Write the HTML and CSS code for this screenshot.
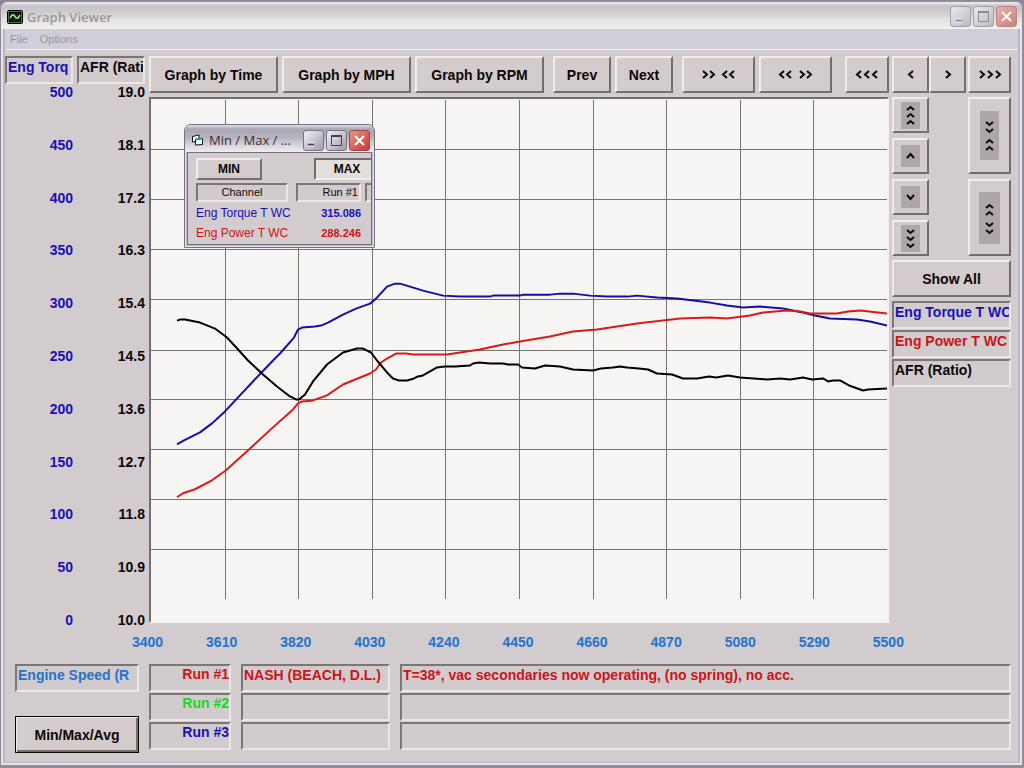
FILE: index.html
```html
<!DOCTYPE html>
<html lang="en">
<head>
<meta charset="utf-8">
<title>Graph Viewer</title>
<link rel="stylesheet" href="styles.css">
</head>
<body>
<div class="window">
  <header class="titlebar">
    <svg class="app-icon" width="16" height="14" viewBox="0 0 16 14"><rect x="0.5" y="0.5" width="15" height="13" rx="1.5" fill="#b5c9a8" stroke="#000"/><rect x="2" y="2" width="12" height="10" fill="#06280a" stroke="#000"/><path d="M3 8L5 5H7L9 8H11L13 5" fill="none" stroke="#a4ee9a" stroke-width="1.4"/></svg>
    <h1 class="title">Graph Viewer</h1>
    <div class="caption-buttons">
      <button class="cap" aria-label="Minimize"><svg width="19" height="19" viewBox="0 0 19 19"><path d="M5 13.5H11" stroke="#fff" stroke-width="4"/><path d="M5 13.5H11" stroke="#8c8992" stroke-width="2"/></svg></button>
      <button class="cap" aria-label="Maximize"><svg width="19" height="19" viewBox="0 0 19 19"><path d="M4.500 5.500H14.500V14.500H4.500Z" fill="none" stroke="#8c8992"/><path d="M4 5H15" stroke="#8c8992" stroke-width="2"/></svg></button>
      <button class="cap cap-close" aria-label="Close"><svg width="19" height="19" viewBox="0 0 19 19"><path d="M5 5L14 14M14 5L5 14" stroke="#fff" stroke-width="2"/></svg></button>
    </div>
  </header>
  <nav class="menubar"><button class="menu">File</button><button class="menu">Options</button></nav>

  <main class="workspace">
    <section class="axes">
      <div class="axis">
        <div class="field blue">Eng Torq</div>
        <div class="scale blue"><span>500</span><span>450</span><span>400</span><span>350</span><span>300</span><span>250</span><span>200</span><span>150</span><span>100</span><span>50</span><span>0</span></div>
      </div>
      <div class="axis">
        <div class="field">AFR (Rati</div>
        <div class="scale"><span>19.0</span><span>18.1</span><span>17.2</span><span>16.3</span><span>15.4</span><span>14.5</span><span>13.6</span><span>12.7</span><span>11.8</span><span>10.9</span><span>10.0</span></div>
      </div>
    </section>

    <div class="toolbar">
      <div class="group"><button class="btn">Graph by Time</button><button class="btn">Graph by MPH</button><button class="btn">Graph by RPM</button></div>
      <div class="group"><button class="btn">Prev</button><button class="btn">Next</button></div>
      <div class="group"><button class="btn" aria-label="Zoom out"><svg width="36" height="9" viewBox="0 0 36 9"><path class="arrow" d="M2 1L6 4.500L2 8M9 1L13 4.500L9 8M26 1L22 4.500L26 8M33 1L29 4.500L33 8"/></svg></button><button class="btn" aria-label="Zoom in"><svg width="36" height="9" viewBox="0 0 36 9"><path class="arrow" d="M6 1L2 4.500L6 8M13 1L9 4.500L13 8M22 1L26 4.500L22 8M29 1L33 4.500L29 8"/></svg></button></div>
      <button class="btn first" aria-label="First"><svg width="24" height="9" viewBox="0 0 24 9"><path class="arrow" d="M6 1L2 4.500L6 8M14 1L10 4.500L14 8M22 1L18 4.500L22 8"/></svg></button>
    </div>
    <div class="pan">
      <div class="pair"><button class="btn" aria-label="Left"><svg width="8" height="9" viewBox="0 0 8 9"><path class="arrow" d="M6 1L2 4.500L6 8"/></svg></button><button class="btn" aria-label="Right"><svg width="8" height="9" viewBox="0 0 8 9"><path class="arrow" d="M2 1L6 4.500L2 8"/></svg></button></div>
      <button class="btn last" aria-label="Last"><svg width="24" height="9" viewBox="0 0 24 9"><path class="arrow" d="M2 1L6 4.500L2 8M10 1L14 4.500L10 8M18 1L22 4.500L18 8"/></svg></button>
    </div>

    <section class="chart">
      <svg class="plot" viewBox="151 99 736 523" preserveAspectRatio="none" role="img" aria-label="Torque, power and AFR against engine speed">
        <path class="grid" d="M225.500 100V600M298.500 100V600M372.500 100V600M445.500 100V600M519.500 100V600M593.500 100V600M666.500 100V600M740.500 100V600M813.500 100V600M151 149.500H887M151 199.500H887M151 249.500H887M151 299.500H887M151 350.500H887M151 400.500H887M151 450.500H887M151 500.500H887M151 550.500H887"/>
        <polyline class="line torque" points="177,445 184,441 192,437 200,433 212,424 225,412 239,397 253,382 273,361 280,354 294,338 298,330 302,328 315,327 321,326 328,323 343,315 356,309 370,304 376,299 387,287 395,284 400,284 410,287 423,291 443,296 460,297 490,297 493,296 520,296 523,295 550,295 560,294 573,294 590,296 607,297 627,297 637,296 657,298 677,299 710,303 727,306 743,308 760,307 783,309 803,313 815,316 830,319 857,320 870,322 887,326"/>
        <polyline class="line power" points="177,498 183,494 195,490 212,481 226,471 247,452 273,428 293,410 298,404 302,402 313,401 327,396 343,385 370,374 376,370 381,363 387,359 396,354 406,354 413,355 447,355 480,350 503,345 520,342 550,337 573,332 597,330 637,324 680,319 710,318 727,319 750,316 763,313 775,312 787,311 800,312 810,314 837,314 848,312 860,311 887,314"/>
        <polyline class="line afr" points="177,321 180,320 185,320 200,323 215,329 227,338 239,351 248,361 263,375 277,387 290,397 296,400 299,400 305,395 313,382 327,365 343,353 350,351 357,349 363,349 371,353 377,361 387,373 393,379 399,381 407,381 414,379 418,377 423,376 437,368 445,367 455,367 470,366 473,364 479,363 490,364 503,364 508,365 518,365 522,368 535,369 545,366 560,367 573,370 593,371 601,369 613,368 620,367 627,368 639,369 648,370 657,374 672,375 683,379 697,379 709,377 716,378 728,376 740,378 767,380 780,379 790,380 803,378 812,380 823,379 828,382 833,381 840,381 849,386 863,391 868,390 887,389"/>
      </svg>
      <section class="popup">
        <header class="popup-title">
          <svg width="13" height="12" viewBox="0 0 13 12"><path d="M1.500 2.500L8 1V7L1.500 8Z" fill="#fff" stroke="#111"/><path d="M4.500 5.500L11.500 4.500V10.500L4.500 11Z" fill="#fff" stroke="#111"/><path d="M4.500 5.500L11.500 4.500" stroke="#2a9aa0" stroke-width="2"/></svg>
          <h2 class="popup-name">Min / Max / ...</h2>
          <div class="caption-buttons">
            <button class="cap cap-live" aria-label="Minimize"><svg width="19" height="19" viewBox="0 0 19 19"><path d="M4 13.500H10" stroke="#fff" stroke-width="4"/><path d="M4 13.500H10" stroke="#43434f" stroke-width="2"/></svg></button>
            <button class="cap cap-live" aria-label="Maximize"><svg width="19" height="19" viewBox="0 0 19 19"><path d="M4.500 4.500H14.500V14.500H4.500Z" fill="none" stroke="#43434f"/><path d="M4 5H15" stroke="#43434f" stroke-width="2"/></svg></button>
            <button class="cap cap-close cap-hot" aria-label="Close"><svg width="19" height="19" viewBox="0 0 19 19"><path d="M5 5L14 14M14 5L5 14" stroke="#fff" stroke-width="2"/></svg></button>
          </div>
        </header>
        <div class="popup-body">
          <div class="modes"><button class="btn mode">MIN</button><button class="btn mode pressed" aria-pressed="true">MAX</button></div>
          <table class="results">
            <thead><tr><th class="channel"><div class="field small">Channel</div></th><th class="run"><div class="field small right">Run #1</div></th><th class="run"><div class="field small"></div></th></tr></thead>
            <tbody>
              <tr class="blue"><td>Eng Torque T WC</td><td class="value">315.086</td><td></td></tr>
              <tr class="red"><td>Eng Power T WC</td><td class="value">288.246</td><td></td></tr>
            </tbody>
          </table>
        </div>
      </section>
    </section>

    <aside class="side">
      <div class="vertical">
        <div class="stack">
          <button class="btn" aria-label="Top"><svg class="pad" width="19" height="27" viewBox="0 0 19 27"><path class="thin" d="M6 8L9.500 5L13 8M6 15L9.500 12L13 15M6 22L9.500 19L13 22"/></svg></button>
          <button class="btn" aria-label="Up"><svg class="pad" width="19" height="22" viewBox="0 0 19 22"><path class="thin" d="M6 13L9.500 9L13 13"/></svg></button>
          <button class="btn" aria-label="Down"><svg class="pad" width="19" height="22" viewBox="0 0 19 22"><path class="thin" d="M6 9L9.500 13L13 9"/></svg></button>
          <button class="btn" aria-label="Bottom"><svg class="pad" width="19" height="27" viewBox="0 0 19 27"><path class="thin" d="M6 5L9.500 8L13 5M6 12L9.500 15L13 12M6 19L9.500 22L13 19"/></svg></button>
        </div>
        <div class="stack tall">
          <button class="btn" aria-label="Compress vertically"><svg class="pad" width="19" height="49" viewBox="0 0 19 49"><path class="thin" d="M6 11L9.500 14L13 11M6 18L9.500 21L13 18M6 32L9.500 29L13 32M6 39L9.500 36L13 39"/></svg></button>
          <button class="btn" aria-label="Expand vertically"><svg class="pad" width="21" height="52" viewBox="0 0 21 52"><path class="thin" d="M7 16L10.500 13L14 16M7 23L10.500 20L14 23M7 31L10.500 34L14 31M7 38L10.500 41L14 38"/></svg></button>
        </div>
      </div>
      <button class="btn show-all">Show All</button>
      <div class="legend"><div class="field blue">Eng Torque T WC</div><div class="field red">Eng Power T WC</div><div class="field">AFR (Ratio)</div></div>
    </aside>

    <div class="ticks"><span>3400</span><span>3610</span><span>3820</span><span>4030</span><span>4240</span><span>4450</span><span>4660</span><span>4870</span><span>5080</span><span>5290</span><span>5500</span></div>
  </main>

  <footer class="runs">
    <div class="speed"><div class="field sky">Engine Speed (R</div><button class="btn default">Min/Max/Avg</button></div>
    <div class="run-col run-id"><div class="field red">Run #1</div><div class="field green">Run #2</div><div class="field blue">Run #3</div></div>
    <div class="run-col"><div class="field red">NASH (BEACH, D.L.)</div><div class="field"></div><div class="field"></div></div>
    <div class="run-col"><div class="field red">T=38*, vac secondaries now operating, (no spring), no acc.</div><div class="field"></div><div class="field"></div></div>
  </footer>
</div>
</body>
</html>
```
FILE: styles.css
```css
* { box-sizing: border-box; }

body {
  margin: 0;
  background: #8d8796;
  font: bold 14px/16px "Liberation Sans", Arial, sans-serif;
  color: #0b0608;
}

button { font: inherit; color: inherit; padding: 0; margin: 0; }
svg { display: block; }

.window {
  display: flex;
  flex-direction: column;
  min-height: 100vh;
  background: #d2cccf;
  border: solid #918b98;
  border-width: 2px 2px 3px 1px;
  border-radius: 8px 8px 0 0;
  box-shadow: inset 2px -2px 0 #e6e1ea, inset -2px 0 0 #e6e1ea, inset 4px -3px 0 #bdb7c0, inset -4px 0 0 #bdb7c0;
}

.titlebar {
  display: flex;
  align-items: center;
  gap: 4px;
  height: 27px;
  padding: 2px 5px 0 6px;
  border-radius: 7px 7px 0 0;
  background: linear-gradient(#f2eff3 0, #c9c4cb 14%, #cdc9cd 35%, #e3e1e1 65%, #f2f1ed 100%);
}

.title { flex: 1; margin: 0; font: 600 13px/18px "Open Sans", "Noto Sans", sans-serif; color: #99959a; }

.caption-buttons { display: flex; gap: 2px; }

.cap {
  width: 21px;
  height: 21px;
  border: 1px solid #a39fab;
  border-radius: 3px;
  background: linear-gradient(135deg, #ebe9ee, #bcb8c2);
}
.cap-live { border-color: #777584; background: linear-gradient(135deg, #f1f0f5, #9e9bab); }
.cap-close { border-color: #b98484; background: linear-gradient(135deg, #e6b1a8, #cb7f78); }
.cap-hot { border-color: #9f4448; background: linear-gradient(135deg, #ec9583, #c43838); }

.menubar {
  display: flex;
  gap: 12px;
  height: 21px;
  margin: 0 4px;
  padding-left: 5px;
  border-bottom: 1px solid #f5f2f4;
  background: #d0ced8;
}
.menu { border: 0; background: none; font: 11px/18px "Liberation Sans", Arial, sans-serif; color: #99959b; }

.workspace {
  flex: 1;
  display: grid;
  grid-template-columns: 141px minmax(0, 1fr) 119px;
  grid-template-rows: 37px minmax(380px, 1fr) 16px;
  column-gap: 3px;
  padding: 6px 11px 0 4px;
}

.field {
  height: 28px;
  padding: 0 1px;
  overflow: hidden;
  white-space: nowrap;
  line-height: 19px;
  border: 2px solid;
  border-color: #7d7575 #ebe7e5 #ebe7e5 #7d7575;
  background: #d1cbcd;
}

.blue { color: #1612b4; }
.red { color: #cc1418; }
.green { color: #18d81c; }
.sky { color: #2473cc; }

.btn {
  display: flex;
  align-items: center;
  justify-content: center;
  border: 2px solid;
  border-color: #f0ecea #746d6d #746d6d #f0ecea;
  background: #d3cbcc;
  white-space: nowrap;
}

.arrow { fill: none; stroke: #0b0608; stroke-width: 2; }
.pad { background: #aea7a6; }
.thin { fill: none; stroke: #0b0608; stroke-width: 2; }

.axes { grid-row: 1 / 4; display: grid; grid-template-columns: 68px 68px; gap: 4px; padding-bottom: 22px; }
.axis { display: flex; flex-direction: column; }
.scale { flex: 1; display: flex; flex-direction: column; justify-content: space-between; align-items: flex-end; }

.toolbar {
  grid-column: 2;
  display: grid;
  grid-template-columns: minmax(0, 395fr) minmax(0, 120fr) minmax(0, 150fr) minmax(0, 48fr);
  column-gap: 9px;
}
.group { display: flex; gap: 4px; }
.group .btn { flex: 1; }
.first { margin-left: 4px; }

.pan { grid-column: 3; display: flex; justify-content: space-between; }
.pair { display: flex; }
.pair .btn { width: 37px; }
.last { width: 43px; }

.chart {
  grid-column: 2;
  grid-row: 2;
  position: relative;
  margin: 4px 0 11px;
  border: 2px solid;
  border-color: #746d6d #f5f3f0 #f5f3f0 #746d6d;
  background: #f6f5f3;
}
.plot { width: 100%; height: 100%; position: absolute; }
.grid { fill: none; stroke: #77736f; stroke-width: 1; shape-rendering: crispEdges; vector-effect: non-scaling-stroke; }
.line { fill: none; stroke-width: 2; stroke-linejoin: round; vector-effect: non-scaling-stroke; }
.torque { stroke: #1010a4; }
.power { stroke: #d81a18; }
.afr { stroke: #000; }

.ticks {
  grid-column: 2;
  grid-row: 3;
  display: flex;
  justify-content: space-between;
  margin: 0 -15px 0 -17px;
  color: #2473cc;
}

.side { grid-column: 3; grid-row: 2; display: flex; flex-direction: column; gap: 4px; padding-top: 4px; }
.vertical { display: flex; justify-content: space-between; }
.stack { display: flex; flex-direction: column; gap: 5px; width: 37px; }
.stack .btn { height: 36px; }
.tall { width: 43px; }
.stack.tall .btn { height: 77px; }
.show-all { height: 37px; }
.legend { display: flex; flex-direction: column; gap: 1px; }

.popup {
  position: absolute;
  left: 33px;
  top: 25px;
  width: 191px;
  overflow: hidden;
  border: 1px solid #77717f;
  border-radius: 7px 7px 0 0;
  background: #bcb6c4;
  box-shadow: inset 0 0 0 1px #e7e3ee;
}
.popup-title {
  display: flex;
  align-items: center;
  gap: 5px;
  height: 27px;
  padding: 3px 4px 0 6px;
  background: linear-gradient(#e3e0ea 0, #a9a5b3 15%, #b5b1bd 45%, #dddbe0 80%, #efedf0 100%);
}
.popup-name { flex: 1; margin: 0; white-space: nowrap; font: 13px/18px "Open Sans", "Noto Sans", sans-serif; color: #332f38; }
.popup-body {
  margin: 0 2px 2px;
  height: 93px;
  padding: 5px 0 0 8px;
  overflow: hidden;
  border: 1px solid #77717b;
  background: #d2cccf;
}
.modes { display: flex; gap: 52px; margin-bottom: 2px; }
.mode { flex: none; width: 66px; height: 22px; font-size: 12px; }
.pressed { border-color: #746d6d #f0ecea #f0ecea #746d6d; background: #e3dfdd; }

.results { width: 238px; table-layout: fixed; border-collapse: collapse; font-size: 12px; font-weight: normal; }
.results th, .results td { padding: 0; text-align: left; height: 20px; font-weight: normal; white-space: nowrap; }
.results td { padding-top: 1px; }
.channel { width: 100px; }
.run { width: 69px; }
.channel .field { margin-right: 8px; text-align: center; }
.run .field { margin-right: 4px; }
.small { height: 19px; padding: 0 1px; font-size: 11px; line-height: 15px; color: #0b0608; }
.right { text-align: right; }
.results .value { padding-right: 4px; text-align: right; font-size: 11px; font-weight: bold; }

.runs {
  display: grid;
  grid-template-columns: 124px 82px 149px minmax(0, 1fr);
  column-gap: 10px;
  padding: 14px 11px 12px 14px;
}
.run-col { display: flex; flex-direction: column; gap: 1px; }
.run-id .field { padding: 0; line-height: 17px; text-align: right; }
.speed { display: flex; flex-direction: column; gap: 24px; }
.default { height: 37px; border-color: #0b0608; border-width: 1px; box-shadow: inset 1px 1px 0 #f0ecea, inset -2px -2px 0 #746d6d; }
```
